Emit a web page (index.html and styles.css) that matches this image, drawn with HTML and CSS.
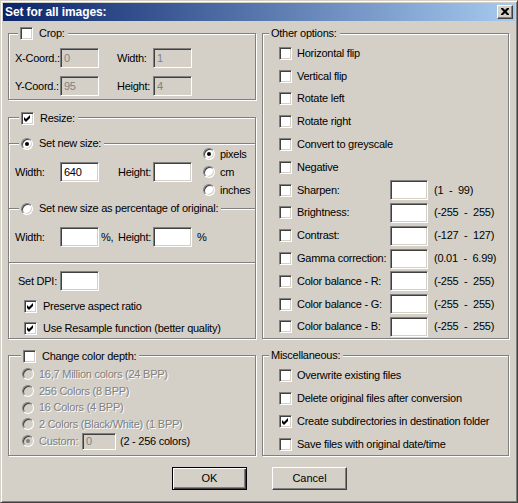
FILE: index.html
```html
<!DOCTYPE html>
<html>
<head>
<meta charset="utf-8">
<title>Set for all images</title>
<link rel="stylesheet" href="styles.css">
</head>
<body>
<div class="win">
  <div class="titlebar">
    <span class="title">Set for all images:</span>
    <span class="xbtn"><svg width="8" height="7" viewBox="0 0 8 7"><path d="M0 0h2l2 2 2-2h2v1L5.5 3.5 8 6v1H6L4 5 2 7H0V6l2.5-2.5L0 1z" fill="#000"/></svg></span>
  </div>
  <div class="main">
    <div class="col col-left">
      <div class="group crop">
        <div class="legend lg-crop"><span class="cb"></span><span class="lt">Crop:</span></div>
        <div class="frow">
          <span class="lab w45">X-Coord.:</span><span class="inp dis w39">0</span>
          <span class="lab w36 ml18">Width:</span><span class="inp dis w39">1</span>
        </div>
        <div class="frow r2">
          <span class="lab w45">Y-Coord.:</span><span class="inp dis w39">95</span>
          <span class="lab w36 ml18">Height:</span><span class="inp dis w39">4</span>
        </div>
      </div>

      <div class="group resize">
        <div class="legend lg-resize"><span class="cb"><svg class="chk" width="7" height="7" viewBox="0 0 7 7"><path d="M0 2l2 2 4-4v3L2 7 0 5z" fill="#000"/></svg></span><span class="lt">Resize:</span></div>

        <div class="sec sec-new">
          <div class="legend lg-sec"><span class="rb on"></span><span class="lt">Set new size:</span></div>
          <div class="sizerow">
            <span class="lab w45">Width:</span><span class="inp w39">640</span>
            <span class="lab w35 ml19">Height:</span><span class="inp w39"></span>
          </div>
          <div class="units">
            <div class="urow"><span class="rb on"></span><span class="ul">pixels</span></div>
            <div class="urow"><span class="rb"></span><span class="ul">cm</span></div>
            <div class="urow"><span class="rb"></span><span class="ul">inches</span></div>
          </div>
        </div>

        <div class="sec sec-pct">
          <div class="legend lg-sec"><span class="rb"></span><span class="lt">Set new size as percentage of original:</span></div>
          <div class="sizerow">
            <span class="lab w45">Width:</span><span class="inp w39"></span>
            <span class="lab pc">%,</span><span class="lab w35">Height:</span><span class="inp w39"></span>
            <span class="lab pc2">%</span>
          </div>
        </div>

        <div class="sec sec-dpi">
          <div class="dpirow"><span class="lab w43">Set DPI:</span><span class="inp w39"></span></div>
          <div class="crow"><span class="cb"><svg class="chk" width="7" height="7" viewBox="0 0 7 7"><path d="M0 2l2 2 4-4v3L2 7 0 5z" fill="#000"/></svg></span><span class="cl">Preserve aspect ratio</span></div>
          <div class="crow"><span class="cb"><svg class="chk" width="7" height="7" viewBox="0 0 7 7"><path d="M0 2l2 2 4-4v3L2 7 0 5z" fill="#000"/></svg></span><span class="cl">Use Resample function (better quality)</span></div>
        </div>
      </div>

      <div class="group depth">
        <div class="legend lg-depth"><span class="cb"></span><span class="lt">Change color depth:</span></div>
        <div class="drow"><span class="rb dis"></span><span class="dl">16,7 Million colors (24 BPP)</span></div>
        <div class="drow"><span class="rb dis"></span><span class="dl">256 Colors (8 BPP)</span></div>
        <div class="drow"><span class="rb dis"></span><span class="dl">16 Colors (4 BPP)</span></div>
        <div class="drow"><span class="rb dis"></span><span class="dl">2 Colors (Black/White) (1 BPP)</span></div>
        <div class="drow"><span class="rb dis on"></span><span class="dl w43">Custom:</span><span class="inp dis small">0</span><span class="cc">(2 - 256 colors)</span></div>
      </div>
    </div>

    <div class="col col-right">
      <div class="group other">
        <div class="legend lg-right"><span class="lt">Other options:</span></div>
        <div class="orow"><span class="cb"></span><span class="ol">Horizontal flip</span></div>
        <div class="orow"><span class="cb"></span><span class="ol">Vertical flip</span></div>
        <div class="orow"><span class="cb"></span><span class="ol">Rotate left</span></div>
        <div class="orow"><span class="cb"></span><span class="ol">Rotate right</span></div>
        <div class="orow"><span class="cb"></span><span class="ol">Convert to greyscale</span></div>
        <div class="orow"><span class="cb"></span><span class="ol">Negative</span></div>
        <div class="orow"><span class="cb"></span><span class="ol fixed">Sharpen:</span><span class="inp w38"></span><span class="rng">(1  -  99)</span></div>
        <div class="orow"><span class="cb"></span><span class="ol fixed">Brightness:</span><span class="inp w38"></span><span class="rng">(-255  -  255)</span></div>
        <div class="orow"><span class="cb"></span><span class="ol fixed">Contrast:</span><span class="inp w38"></span><span class="rng">(-127  -  127)</span></div>
        <div class="orow"><span class="cb"></span><span class="ol fixed">Gamma correction:</span><span class="inp w38"></span><span class="rng">(0.01  -  6.99)</span></div>
        <div class="orow"><span class="cb"></span><span class="ol fixed">Color balance - R:</span><span class="inp w38"></span><span class="rng">(-255  -  255)</span></div>
        <div class="orow"><span class="cb"></span><span class="ol fixed">Color balance - G:</span><span class="inp w38"></span><span class="rng">(-255  -  255)</span></div>
        <div class="orow"><span class="cb"></span><span class="ol fixed">Color balance - B:</span><span class="inp w38"></span><span class="rng">(-255  -  255)</span></div>
      </div>

      <div class="group misc">
        <div class="legend lg-right"><span class="lt">Miscellaneous:</span></div>
        <div class="mrow"><span class="cb"></span><span class="ol">Overwrite existing files</span></div>
        <div class="mrow"><span class="cb"></span><span class="ol">Delete original files after conversion</span></div>
        <div class="mrow"><span class="cb"><svg class="chk" width="7" height="7" viewBox="0 0 7 7"><path d="M0 2l2 2 4-4v3L2 7 0 5z" fill="#000"/></svg></span><span class="ol">Create subdirectories in destination folder</span></div>
        <div class="mrow"><span class="cb"></span><span class="ol">Save files with original date/time</span></div>
      </div>
    </div>
  </div>

  <div class="buttons">
    <span class="btn def">OK</span>
    <span class="btn">Cancel</span>
  </div>
</div>
</body>
</html>
```

FILE: styles.css
```css
html, body {
  margin: 0;
  padding: 0;
  background: #d4d0c8;
}
body {
  font-family: "Liberation Sans", Arial, sans-serif;
  font-size: 11px;
  letter-spacing: -0.25px;
  color: #000;
  line-height: 13px;
}
.win {
  width: 518px;
  height: 503px;
  box-sizing: border-box;
  border: 1px solid;
  border-color: #d4d0c8 #404040 #404040 #d4d0c8;
  box-shadow: inset 1px 1px 0 #fff, inset -1px -1px 0 #808080;
  padding: 2px;
  background: #d4d0c8;
  overflow: hidden;
}
.titlebar {
  height: 18px;
  display: flex;
  align-items: center;
  justify-content: space-between;
  background: linear-gradient(to right, #0a246a, #a6caf0);
  padding-left: 2px;
  padding-right: 2px;
}
.title {
  color: #fff;
  font-weight: bold;
  font-size: 12px;
  letter-spacing: -0.1px;
}
.xbtn {
  width: 16px;
  height: 14px;
  box-sizing: border-box;
  background: #d4d0c8;
  border: 1px solid;
  border-color: #fff #404040 #404040 #fff;
  box-shadow: inset -1px -1px 0 #808080;
  display: flex;
  align-items: center;
  justify-content: center;
  padding-right: 1px;
  padding-bottom: 1px;
}
.xbtn svg { display: block; }

.main {
  display: flex;
  padding-left: 5px;
  gap: 6px;
}
.col { display: flex; flex-direction: column; }
.col-left { width: 248px; }
.col-right { width: 247px; }

.group {
  position: relative;
  box-sizing: border-box;
  border: 1px solid #808080;
  box-shadow: inset 1px 1px 0 #fff, 1px 1px 0 #fff;
}
.legend {
  position: absolute;
  display: flex;
  align-items: center;
  background: #d4d0c8;
  padding: 0 3px 0 2px;
  height: 13px;
}
.legend .lt { margin-left: 6px; white-space: nowrap; }
.lg-right .lt { margin-left: 0; }

.crop { margin-top: 12px; height: 67px; padding: 14px 0 0 6px; }
.lg-crop { top: -7px; left: 9px; }
.resize { margin-top: 17px; height: 222px; padding-top: 25px; }
.lg-resize { top: -6px; left: 10px; }
.depth { margin-top: 16px; height: 101px; padding: 10px 0 0 13px; }
.lg-depth { top: -6px; left: 12px; }
.other { margin-top: 12px; height: 306px; padding: 8px 0 0 16px; }
.misc { margin-top: 16px; height: 101px; padding: 8px 0 0 16px; }
.lg-right { top: -7px; left: 6px; }

.frow { display: flex; align-items: center; height: 20px; }
.frow.r2 { margin-top: 8px; }

.lab { white-space: nowrap; flex-shrink: 0; }
.w45 { width: 45px; }
.w43 { width: 43px; }
.w36 { width: 36px; }
.w35 { width: 35px; }
.ml18 { margin-left: 18px; }
.ml19 { margin-left: 19px; }

.inp {
  display: block;
  flex-shrink: 0;
  height: 20px;
  box-sizing: border-box;
  border: 1px solid;
  border-color: #808080 #fff #fff #808080;
  box-shadow: inset 1px 1px 0 #404040, inset -1px -1px 0 #d4d0c8;
  background: #fff;
  padding: 3px 0 0 3px;
  line-height: 13px;
  color: #000;
}
.inp.dis { background: #d4d0c8; color: #808080; }
.w39 { width: 39px; }
.w38 { width: 38px; }
.inp.small { width: 34px; height: 17px; padding-top: 1px; }

.cb {
  display: block;
  flex-shrink: 0;
  width: 13px;
  height: 13px;
  box-sizing: border-box;
  border: 1px solid;
  border-color: #808080 #fff #fff #808080;
  box-shadow: inset 1px 1px 0 #404040, inset -1px -1px 0 #d4d0c8;
  background: #fff;
  padding: 2px;
}
.chk { display: block; }

.rb {
  display: block;
  position: relative;
  flex-shrink: 0;
  width: 12px;
  height: 12px;
  box-sizing: border-box;
  border-radius: 50%;
  border: 1px solid;
  border-color: #808080 #fff #fff #808080;
  box-shadow: inset 1px 1px 0 #404040, inset -1px -1px 0 #d4d0c8;
  background: #fff;
}
.rb.on::after {
  content: "";
  position: absolute;
  left: 3px;
  top: 3px;
  width: 4px;
  height: 4px;
  border-radius: 50%;
  background: #000;
}
.rb.dis { background: #d4d0c8; }
.rb.dis.on::after { background: #808080; }

.sec {
  position: relative;
  box-sizing: border-box;
  border-top: 1px solid #808080;
  box-shadow: inset 0 1px 0 #fff;
}
.lg-sec { top: -7px; left: 10px; }
.sec-new { height: 65px; display: flex; padding-left: 6px; }
.sec-new .sizerow { padding-top: 18px; }
.sizerow { display: flex; align-items: center; height: 20px; box-sizing: content-box; }
.units { margin-left: 11px; padding-top: 1px; }
.urow { display: flex; align-items: center; height: 18px; }
.ul { margin-left: 5px; }
.sec-pct { height: 54px; padding: 18px 0 0 6px; }
.pc { margin-left: 2px; width: 17px; }
.pc2 { margin-left: 5px; }
.sec-dpi { height: 76px; padding: 8px 0 0 9px; }
.dpirow { display: flex; align-items: center; height: 20px; }
.dpirow .w43 { width: 42px; }
.crow { display: flex; align-items: center; height: 22px; padding-left: 6px; }
.crow:first-of-type { margin-top: 0; }
.dpirow + .crow { margin-top: 4px; }
.cl { margin-left: 6px; white-space: nowrap; }

.drow { display: flex; align-items: center; height: 16.7px; }
.dl { margin-left: 5px; color: #808080; text-shadow: 1px 1px 0 #fff; white-space: nowrap; }
.cc { margin-left: 4px; white-space: nowrap; }

.orow { display: flex; align-items: center; height: 22.8px; }
.mrow { display: flex; align-items: center; height: 23px; }
.ol { margin-left: 5px; white-space: nowrap; }
.ol.fixed { width: 93px; flex-shrink: 0; }
.rng { margin-left: 6px; white-space: pre; }

.buttons {
  display: flex;
  justify-content: center;
  gap: 25px;
  margin-top: 11px;
  padding-left: 1px;
}
.btn {
  width: 75px;
  height: 23px;
  box-sizing: border-box;
  display: flex;
  align-items: center;
  justify-content: center;
  border: 1px solid;
  border-color: #fff #404040 #404040 #fff;
  box-shadow: inset -1px -1px 0 #808080, inset 1px 1px 0 #d4d0c8;
  letter-spacing: 0;
}
.btn.def {
  border-color: #000;
  box-shadow: inset 1px 1px 0 #fff, inset -1px -1px 0 #404040, inset -2px -2px 0 #808080;
}
```
